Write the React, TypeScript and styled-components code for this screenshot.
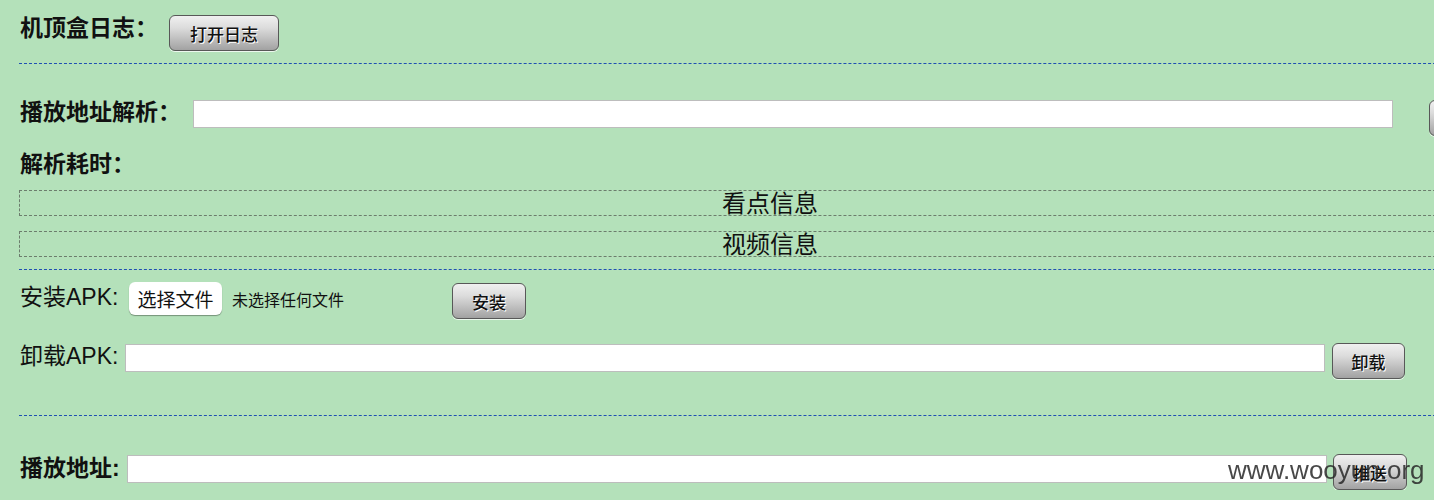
import React from "react";
import styled, { createGlobalStyle } from "styled-components";

const Global = createGlobalStyle`
  html, body {
    margin: 0;
    padding: 0;
    background: #b4e1ba;
    overflow: hidden;
  }
  body {
    font-family: "Liberation Sans", "Noto Sans CJK SC", sans-serif;
    color: #111;
  }
`;

const Page = styled.div`
  width: 1502px;
  padding: 15px 0 0 19px;
`;

const Row = styled.div<{ $mt?: number }>`
  display: flex;
  align-items: flex-start;
  margin-top: ${(p) => p.$mt ?? 0}px;
`;

const Label = styled.div<{ $w: number; $lh: number; $bold?: boolean; $size?: number }>`
  width: ${(p) => p.$w}px;
  flex: none;
  font-size: ${(p) => p.$size ?? 23}px;
  font-weight: ${(p) => (p.$bold ? 700 : 400)};
  line-height: ${(p) => p.$lh}px;
  white-space: nowrap;
  padding-left: 1px;
  box-sizing: border-box;
`;

const StandaloneLabel = styled(Label)`
  margin-top: 16px;
`;

const GrayButton = styled.button<{ $w: number; $mt?: number; $ml?: number }>`
  flex: none;
  width: ${(p) => p.$w}px;
  height: 36px;
  margin-top: ${(p) => p.$mt ?? 0}px;
  margin-left: ${(p) => p.$ml ?? 0}px;
  padding: 0;
  box-sizing: border-box;
  border: 1px solid #585858;
  border-radius: 6px;
  background: linear-gradient(#f0f0f0 0%, #dcdcdc 35%, #b8b8b8 75%, #a2a2a2 100%);
  box-shadow: 0 1px 0 rgba(255, 255, 255, 0.75);
  font-family: "Noto Sans CJK SC", sans-serif;
  font-size: 17px;
  font-weight: 500;
  color: #111;
  text-shadow: 1px 1px 0 #fff;
  cursor: pointer;
`;

const TextInput = styled.input<{ $mt?: number }>`
  flex: none;
  width: 1200px;
  height: 28px;
  margin: ${(p) => p.$mt ?? 0}px 0 0 0;
  box-sizing: border-box;
  border: 1px solid #bdbdbd;
  background: #fff;
  outline: none;
`;

const Rule = styled.div<{ $mt: number }>`
  margin-top: ${(p) => p.$mt}px;
  height: 0;
  border-top: 1px dashed #1f4fb2;
`;

const InfoBox = styled.div<{ $mt: number }>`
  margin-top: ${(p) => p.$mt}px;
  height: 26px;
  box-sizing: border-box;
  border: 1px dashed #6c7d6d;
  text-align: center;
  font-family: "Noto Sans CJK SC", sans-serif;
  font-size: 24px;
  line-height: 22px;
`;

const FilePicker = styled.div`
  flex: none;
  width: 323px;
  display: flex;
  align-items: center;
  height: 33px;
`;

const FileButton = styled.button`
  flex: none;
  width: 93px;
  height: 33px;
  padding: 0;
  border: none;
  border-radius: 6px;
  background: #fff;
  box-shadow: 0 1px 1px rgba(0, 0, 0, 0.35);
  font-family: "Noto Sans CJK SC", sans-serif;
  font-size: 19px;
  color: #111;
`;

const FileStatus = styled.span`
  margin-left: 10px;
  font-family: "Noto Sans CJK SC", sans-serif;
  font-size: 16px;
  color: #111;
`;

const Watermark = styled.div`
  position: fixed;
  left: 1228px;
  top: 455px;
  font-family: "Liberation Sans", sans-serif;
  font-size: 26px;
  line-height: 30px;
  color: rgba(40, 40, 40, 0.85);
  white-space: nowrap;
  pointer-events: none;
`;

export default function App() {
  return (
    <>
      <Global />
      <Page>
        <Row>
          <Label $w={150} $lh={26} $bold>机顶盒日志：</Label>
          <GrayButton $w={110}>打开日志</GrayButton>
        </Row>
        <Rule $mt={12} />
        <Row $mt={36}>
          <Label $w={174} $lh={24} $bold>播放地址解析：</Label>
          <TextInput />
          <GrayButton $w={74} $ml={36}>解析</GrayButton>
        </Row>
        <StandaloneLabel $w={300} $lh={24} $bold>解析耗时：</StandaloneLabel>
        <InfoBox $mt={14}>看点信息</InfoBox>
        <InfoBox $mt={15}>视频信息</InfoBox>
        <Rule $mt={12} />
        <Row $mt={12}>
          <Label $w={110} $lh={30} $size={23}>安装APK:</Label>
          <FilePicker>
            <FileButton>选择文件</FileButton>
            <FileStatus>未选择任何文件</FileStatus>
          </FilePicker>
          <GrayButton $w={74} $mt={1}>安装</GrayButton>
        </Row>
        <Row $mt={24}>
          <Label $w={106} $lh={26} $size={23}>卸载APK:</Label>
          <TextInput $mt={1} />
          <GrayButton $w={73} $ml={7}>卸载</GrayButton>
        </Row>
        <Rule $mt={36} />
        <Row $mt={38}>
          <Label $w={108} $lh={28} $bold>播放地址:</Label>
          <TextInput $mt={1} />
          <GrayButton $w={74} $ml={6}>推送</GrayButton>
        </Row>
      </Page>
      <Watermark>www.wooyun.org</Watermark>
    </>
  );
}
